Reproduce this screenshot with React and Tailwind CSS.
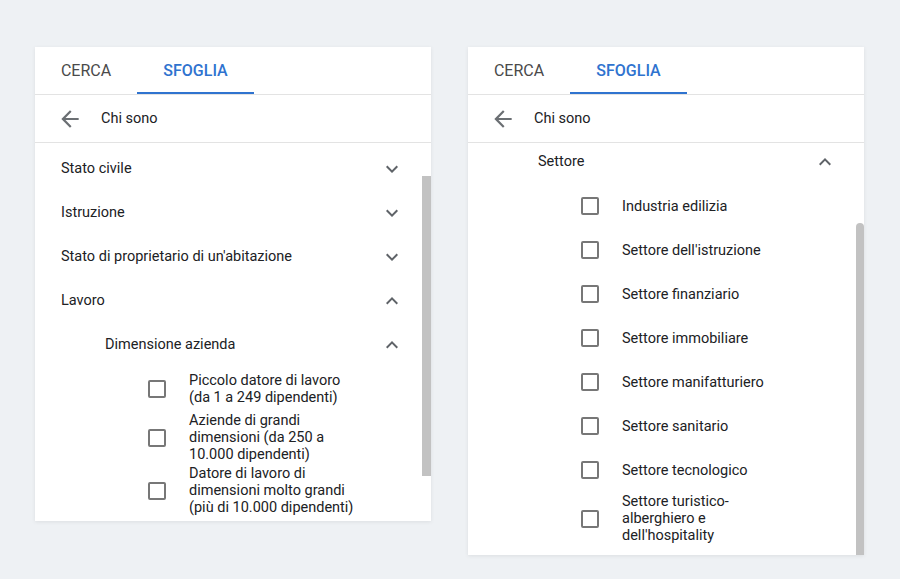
import React from "react";

const ArrowBack = () => (
  <svg width="26" height="26" viewBox="0 0 24 24" fill="#6b6f73">
    <path d="M20 11H7.83l5.59-5.59L12 4l-8 8 8 8 1.41-1.41L7.83 13H20v-2z" />
  </svg>
);

const Chevron = ({ up }) => (
  <svg width="24" height="24" viewBox="0 0 24 24" fill="#5f6368" style={up ? { transform: "rotate(180deg)" } : undefined}>
    <path d="M16.59 8.59 12 13.17 7.41 8.59 6 10l6 6 6-6z" />
  </svg>
);

const Box = () => (
  <div className="w-[18px] h-[18px] shrink-0 rounded-[2px] border-2 border-[#777777]" />
);

const Tabs = () => (
  <div className="flex h-[48px] border-b border-[#e3e3e3] text-[16px]">
    <div className="w-[102px] flex items-center justify-center text-[#4a4a4a] pt-[1px]">CERCA</div>
    <div className="w-[117px] flex items-center justify-center text-[#2f73cf] font-medium relative pt-[1px]">
      SFOGLIA
      <div className="absolute left-0 right-0 bottom-0 h-[2px] bg-[#2f73cf]" />
    </div>
  </div>
);

const Back = () => (
  <div className="flex items-center h-[48px] border-b border-[#e3e3e3] pl-[22px] pt-[1px]">
    <ArrowBack />
    <span className="ml-[18px] text-[14.5px] text-[#202124]">Chi sono</span>
  </div>
);

const Row = ({ label, up, indent }) => (
  <div className={`flex items-center h-[44px] pr-[27px] ${indent ? "pl-[70px]" : "pl-[26px]"}`}>
    <span className="flex-1 text-[14.5px] text-[#202124]">{label}</span>
    <Chevron up={up} />
  </div>
);

const Check = ({ lines }) => (
  <div className="flex items-center min-h-[44px] py-[1px] pl-[113px]">
    <Box />
    <div className="ml-[23px] text-[14.5px] leading-[17px] text-[#202124] whitespace-nowrap">
      {lines.map((l, i) => (
        <div key={i}>{l}</div>
      ))}
    </div>
  </div>
);

export default function App() {
  return (
    <div
      className="w-[900px] h-[579px] bg-[#eef1f4] flex items-start gap-[37px] pl-[35px] pt-[47px] overflow-hidden"
      style={{ fontFamily: "Roboto, 'Noto Sans', sans-serif" }}
    >
      <div className="w-[396px] h-[474px] bg-white shadow-[0_1px_4px_rgba(0,0,0,0.08)] flex flex-col overflow-hidden relative">
        <Tabs />
        <Back />
        <div className="pt-[4px]">
          <Row label="Stato civile" />
          <Row label="Istruzione" />
          <Row label="Stato di proprietario di un'abitazione" />
          <Row label="Lavoro" up />
          <Row label="Dimensione azienda" up indent />
          <Check lines={["Piccolo datore di lavoro", "(da 1 a 249 dipendenti)"]} />
          <Check lines={["Aziende di grandi", "dimensioni (da 250 a", "10.000 dipendenti)"]} />
          <Check lines={["Datore di lavoro di", "dimensioni molto grandi", "(più di 10.000 dipendenti)"]} />
        </div>
        <div className="absolute right-0 top-[129px] w-[9px] h-[300px] bg-[#c2c2c2]" />
      </div>

      <div className="w-[396px] h-[508px] bg-white shadow-[0_1px_4px_rgba(0,0,0,0.08)] flex flex-col overflow-hidden relative">
        <Tabs />
        <Back />
        <div className="-mt-[3px]">
          <Row label="Settore" up indent />
          <Check lines={["Industria edilizia"]} />
          <Check lines={["Settore dell'istruzione"]} />
          <Check lines={["Settore finanziario"]} />
          <Check lines={["Settore immobiliare"]} />
          <Check lines={["Settore manifatturiero"]} />
          <Check lines={["Settore sanitario"]} />
          <Check lines={["Settore tecnologico"]} />
          <Check lines={["Settore turistico-", "alberghiero e", "dell'hospitality"]} />
        </div>
        <div className="absolute right-0 top-[176px] w-[8px] h-[340px] bg-[#c2c2c2] rounded-t-[4px]" />
      </div>
    </div>
  );
}
